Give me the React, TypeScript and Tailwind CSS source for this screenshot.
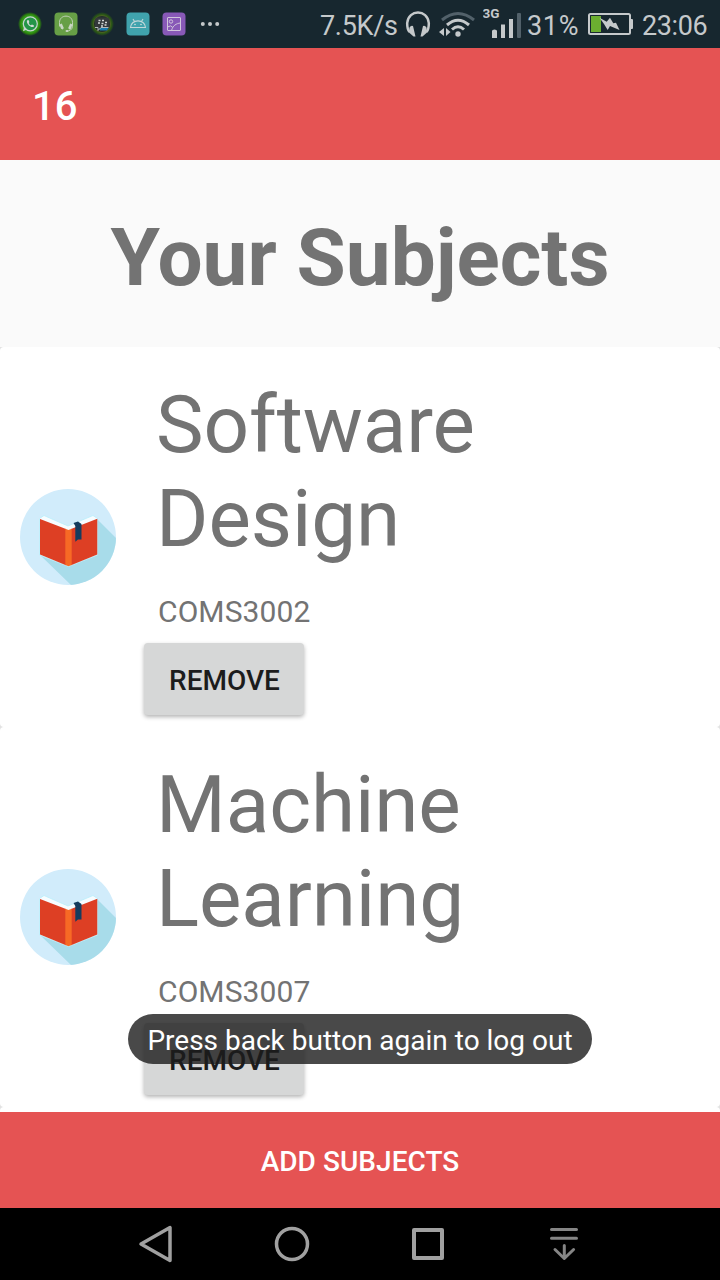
import type { ReactNode } from "react";

function BookIcon() {
  return (
    <svg className="size-24 shrink-0" viewBox="0 0 96 96">
      <defs>
        <clipPath id="disc">
          <circle cx="48" cy="48" r="48" />
        </clipPath>
      </defs>
      <g clipPath="url(#disc)">
        <rect width="96" height="96" fill="#d1ecfb" />
        <path d="M77 30 L96 49 V96 H51 L19 65 L48 50 Z" fill="#a8dcea" />
      </g>
      <path d="M19.500 29.500 L24 26.500 L48 37 L73 26.500 L77.500 29.500 V66 L48.500 77.500 L19.500 66 Z" fill="#f7fcff" stroke="#b9effb" strokeWidth="0.800" />
      <path d="M20 30 L46 40 V76.300 L20 65.500 Z" fill="#dd3f24" />
      <path d="M51 40 L77.300 29.700 V65.500 L51 76.300 Z" fill="#dd3f24" />
      <path d="M45.300 39.700 L48.500 41 L51.700 39.700 V76 L48.500 77.300 L45.300 76 Z" fill="#f76a25" />
      <path d="M53.500 34 L58 32.500 L61.500 35 V50.500 L58 50.500 L55.300 52.700 V37 Z" fill="#143c5e" />
    </svg>
  );
}

function StatusBar() {
  return (
    <header className="flex h-12 shrink-0 items-center bg-[#17272f] text-[#c5c9cb]">
      <svg className="size-6 ml-[18px] shrink-0" viewBox="0 0 24 24">
        <defs>
          <radialGradient id="glow">
            <stop offset="0.6" stopColor="#36a629" />
            <stop offset="0.8" stopColor="#2e8a0c" />
            <stop offset="1" stopColor="#2e8a0c" stopOpacity="0" />
          </radialGradient>
        </defs>
        <circle cx="12" cy="12" r="12" fill="url(#glow)" />
        <circle cx="12.300" cy="11.800" r="7" fill="#249548" stroke="#c9d2ce" strokeWidth="1.200" />
        <path d="M5 19.200 L6.200 14.600 L9 17.600 Z" fill="#c9d2ce" />
        <path d="M9.300 8.200 C7.500 10 11.500 15.800 15.600 15 L16 13.500 L14 12.400 L12.900 13.300 C11.800 12.700 11.200 12 10.700 10.900 L11.400 10 L10.500 8 Z" fill="#d2dad5" />
      </svg>
      <svg className="size-6 ml-3 shrink-0" viewBox="0 0 24 24">
        <rect x="0.500" y="0.500" width="23" height="23" rx="4" fill="#679f46" />
        <path d="M5.500 14.500 V10.500 C5.500 2 18.500 2 18.500 10.500 V14.500 C18 18 15.500 19 12.500 19" fill="none" stroke="#c9d5c3" strokeWidth="0.900" />
        <path d="M5.500 12.500 L7.800 11.500 L9.800 16 L8.800 17.500 L7 16.800 Z M18.500 12.500 L16.200 11.500 L14.200 16 L15.200 17.500 L17 16.800 Z" fill="#c9d5c3" />
        <ellipse cx="13" cy="19" rx="1.500" ry="0.900" fill="#c9d5c3" />
      </svg>
      <svg className="size-6 ml-3 shrink-0" viewBox="0 0 24 24">
        <defs>
          <radialGradient id="dimGlow">
            <stop offset="0.600" stopColor="#365a16" />
            <stop offset="0.800" stopColor="#2b5816" />
            <stop offset="1" stopColor="#2b5816" stopOpacity="0" />
          </radialGradient>
        </defs>
        <circle cx="12" cy="12" r="12" fill="url(#dimGlow)" />
        <circle cx="12" cy="12" r="8.500" fill="#202c2a" stroke="#536b24" strokeWidth="0.800" />
        <path d="M7 5.500 H17 Q19.500 5.500 19.500 8 V13.500 Q19.500 16 17 16 H10.500 L8 19 V16 H7 Q5 16 5 13.500 V8 Q5 5.500 7 5.500" fill="#34383b" />
        <path d="M9.500 16 H18.500 L17 18.500 H10 Z" fill="#197aae" />
        <path d="M5 15.500 H8 V18.500 L11 15.500 H18.500" fill="none" stroke="#c2c8c9" strokeWidth="0.900" />
        <path d="M8.500 8.500 H10.500 M12 8.500 H14 M8 11 H10 M11.500 11.500 H13.500 M15 10.500 H17 M14.500 13 H16.500 M11 14 H13" stroke="#d4d7d7" strokeWidth="1.300" />
      </svg>
      <svg className="size-6 ml-3 shrink-0" viewBox="0 0 24 24">
        <rect x="0.500" y="0.500" width="23" height="23" rx="4" fill="#40a3ad" />
        <path d="M4.500 15.500 C5 6.700 19 6.700 19.500 15.500 Z M7 7 L8.500 9.500 M17 7 L15.500 9.500" fill="none" stroke="#c1d7d9" strokeWidth="1.100" />
        <circle cx="9" cy="12.500" r="0.800" fill="#d3dfe0" />
        <circle cx="15" cy="12.500" r="0.800" fill="#d3dfe0" />
      </svg>
      <svg className="size-6 ml-3 shrink-0" viewBox="0 0 24 24">
        <rect x="0.500" y="0.500" width="23" height="23" rx="4" fill="#8859b7" />
        <rect x="5.500" y="5.500" width="13" height="13" rx="0.500" fill="none" stroke="#d0c5db" strokeWidth="1" />
        <circle cx="9" cy="9.500" r="1.700" fill="none" stroke="#d0c5db" strokeWidth="1" />
        <path d="M5.500 15 Q9 12.500 10.800 15.500 M9.500 18.500 C11 13.500 14 11.500 18.500 11" fill="none" stroke="#d0c5db" strokeWidth="1" />
      </svg>
      <svg className="h-6 w-5 ml-[14px] shrink-0" viewBox="0 0 20 24" fill="currentColor">
        <circle cx="2.800" cy="12" r="2" />
        <circle cx="10" cy="12" r="2" />
        <circle cx="17.200" cy="12" r="2" />
      </svg>

      <span className="ml-[100px] w-[79px] whitespace-nowrap text-[27px] leading-8 tracking-[-0.3px] pt-1">7.5K/s</span>
      <svg className="h-7 w-7 ml-[6px] shrink-0" viewBox="0 0 28 28">
        <path d="M4.500 22 C2 19 2.200 15 2.200 13 C3.500 -1 22.500 -1 23.800 13 C23.800 15 24 19 21.500 22" fill="none" stroke="currentColor" strokeWidth="2.500" />
        <path d="M4.500 17.500 Q6 15 8 16 L10.500 26.500 H8.500 L4 22.500 Z M21.500 17.500 Q20 15 18 16 L15.500 26.500 H17.500 L22 22.500 Z" fill="currentColor" />
      </svg>
      <svg className="h-7 w-9 ml-[6px] shrink-0" viewBox="0 0 36 28">
        <path d="M3 10 Q19 -3 35 10" fill="none" stroke="#52616a" strokeWidth="3" />
        <path d="M8 15 Q19 5.500 30 15 M13 19.500 Q19 14 25 19.500" fill="none" stroke="currentColor" strokeWidth="3" />
        <circle cx="19" cy="24" r="2.700" fill="currentColor" />
        <path d="M5 18 V26 L0 22 Z M7 18 V26 L11.500 22 Z" fill="currentColor" />
      </svg>
      <svg className="h-9 w-10 ml-[8px] -mt-1 shrink-0" viewBox="0 0 40 36">
        <text x="-0.500" y="14" fontSize="13.500" fontWeight="700" fill="currentColor">3G</text>
        <path d="M9 27 Q9 25.500 11.500 25.500 T14 27 V34 H9 Z M18 20.500 H22 V34 H18 Z M26 15 H30 V34 H26 Z" fill="currentColor" />
        <rect x="34" y="9" width="4" height="25" rx="1" fill="#52616a" />
      </svg>
      <span className="ml-[4px] w-[54px] whitespace-nowrap text-[27px] leading-8 tracking-[0.7px] pt-1">31%</span>
      <svg className="h-6 w-[46px] ml-[7px] shrink-0" viewBox="0 0 46 24">
        <rect x="1" y="2" width="41" height="20" rx="1.500" fill="none" stroke="currentColor" strokeWidth="2" />
        <rect x="42" y="7" width="3" height="10" rx="1" fill="currentColor" />
        <rect x="3" y="4" width="10" height="16" fill="#6bae30" />
        <path d="M11.500 5.700 L18.700 9.700 L22 5.700 L25.300 11.300 L28 10.700 L31.500 18 L22 14 L19.700 18 L16 12 Z" fill="#c5c9cb" />
      </svg>
      <span className="ml-[8px] whitespace-nowrap text-[27px] leading-8 tracking-[-0.4px] pt-1">23:06</span>
    </header>
  );
}

function SubjectCard({ name, code }: { name: ReactNode; code: string }) {
  return (
    <article className="flex h-[380px] shrink-0 items-center rounded-[4px] bg-white pl-5">
      <BookIcon />
      <div className="ml-7 flex h-full flex-col items-start pt-[31px]">
        <h2 className="ml-3 text-[80px] leading-[94px] tracking-[-0.1px] text-[#737373]">{name}</h2>
        <p className="ml-3.5 mt-[28px] text-[30px] leading-9 tracking-[0.1px] text-[#737373]">{code}</p>
        <button className="mt-[13px] h-[72px] w-40 rounded-[4px] bg-[#d6d7d7] pt-1 pl-px text-[28px] font-medium text-[#1c1c1c] shadow-[0_2px_4px_rgba(0,0,0,0.3)]">
          REMOVE
        </button>
      </div>
    </article>
  );
}

export default function App() {
  return (
    <div className="relative flex h-[1280px] w-[720px] flex-col overflow-hidden bg-[#fafafa] font-['Roboto',sans-serif]">
      <StatusBar />
      <div className="flex h-28 shrink-0 items-center bg-[#e55353] pl-8 pt-1.5 text-[40px] font-medium text-white">16</div>
      <main className="flex h-[952px] shrink-0 flex-col overflow-hidden">
        <h1 className="h-[187px] shrink-0 pt-[51px] text-center text-[80px] leading-[94px] font-bold text-[#737373]">
          Your Subjects
        </h1>
        <section className="flex flex-1 flex-col bg-[#e2e2e2]">
          <SubjectCard name={<>Software<br />Design</>} code="COMS3002" />
          <SubjectCard name={<>Machine<br />Learning</>} code="COMS3007" />
          <div className="flex-1 rounded-t-[4px] bg-white" />
        </section>
      </main>
      <button className="h-24 shrink-0 bg-[#e55353] pt-1 text-[28px] font-medium tracking-[0.05px] text-white">ADD SUBJECTS</button>
      <nav className="flex h-[72px] shrink-0 items-center bg-black pl-[136px]">
        <svg className="size-10 shrink-0" viewBox="0 0 40 40" fill="none" stroke="#a0a0a0" strokeWidth="3.500" strokeLinejoin="round">
          <path d="M5 20 L34 3.500 V36.500 Z" />
        </svg>
        <svg className="ml-24 size-10 shrink-0" viewBox="0 0 40 40" fill="none" stroke="#a0a0a0" strokeWidth="3.500">
          <circle cx="20" cy="20" r="15.500" />
        </svg>
        <svg className="ml-24 size-10 shrink-0" viewBox="0 0 40 40" fill="none" stroke="#a0a0a0" strokeWidth="4" strokeLinejoin="round">
          <rect x="6" y="6" width="28" height="28" />
        </svg>
        <svg className="ml-24 size-10 shrink-0" viewBox="0 0 40 40" fill="none" stroke="#858585" strokeWidth="3" strokeLinecap="round" strokeLinejoin="round">
          <path d="M7.500 5.500 H32.500 M7.500 14.300 H32.500 M20.300 21.500 V34 M11 25.500 L20.300 34.500 L29.600 25.500" />
        </svg>
      </nav>
      <div className="absolute left-32 top-[1014px] flex h-[50px] w-[464px] items-center justify-center rounded-full bg-[#1c1c1c]/80 pt-1 text-[28px] whitespace-nowrap text-white">
        Press back button again to log out
      </div>
    </div>
  );
}
